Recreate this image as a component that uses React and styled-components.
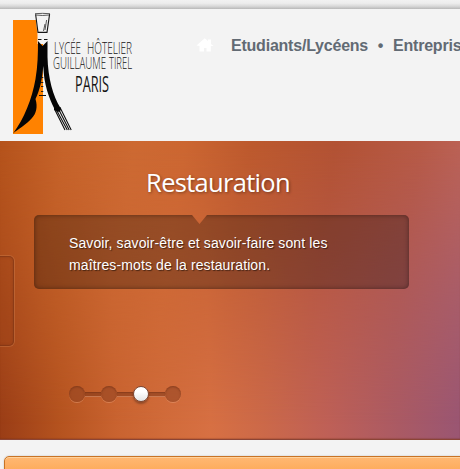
import React from 'react';
import styled, { createGlobalStyle } from 'styled-components';

const GlobalStyle = createGlobalStyle`
  * { box-sizing: border-box; }
  body { margin: 0; background: #f3f3f3; overflow: hidden; font-family: "Liberation Sans", Arial, sans-serif; }
`;

const Page = styled.div`
  height: 469px;
  overflow: hidden;
  display: flex;
  flex-direction: column;
`;

const TopShade = styled.div`
  height: 9px;
  flex: none;
  background: linear-gradient(#f1f1f1 0, #ededed 35%, #d9d9d9 68%, #b8b8b8 100%);
`;

const Header = styled.header`
  height: 132px;
  flex: none;
  display: flex;
  align-items: flex-start;
  background: #f3f3f3;
`;

const Logo = styled.svg`
  width: 150px;
  height: 132px;
  flex: none;
`;

const Nav = styled.nav`
  display: flex;
  align-items: center;
  margin: 27px 0 0 46px;
  height: 20px;
  white-space: nowrap;
  font-size: 16px;
  font-weight: bold;
  letter-spacing: -0.22px;
  color: #626a73;
`;

const HomeIcon = styled.svg`
  width: 18px;
  height: 16px;
  margin: 0 17px 2px 0;
`;

const NavLink = styled.a`
  color: inherit;
`;

const Separator = styled.span`
  width: 25px;
  text-align: center;
`;

const Hero = styled.section`
  position: relative;
  isolation: isolate;
  height: 299px;
  flex: none;
  border-bottom: 1px solid #8b4436;
  background: linear-gradient(88deg, #9a3d16 0, #b5531f 13%, #c96330 25%, #d16b3a 35%, #d77043 45%, #cc6949 56%, #be6057 70%, #aa5a64 85%, #975575 100%);
  box-shadow: inset 0 2px 2px -1px #602b1999, inset 0 -1px 1px #70301844;
  &::before {
    content: "";
    position: absolute;
    inset: 0;
    z-index: -1;
    background: linear-gradient(98deg, #b5531b 0, #c6632a 13%, #cc6932 27%, #cb6631 37%, #bc592d 50%, #b25233 67%, #b75a46 84%, #bf6962 100%);
    mask-image: linear-gradient(#000 0, #000c 20%, #0007 50%, transparent 95%);
  }
`;

const Slide = styled.article`
  width: 375px;
  margin-left: 34px;
  padding-top: 23px;
`;

const Title = styled.h2`
  margin: 0 7px 0 0;
  height: 51px;
  font: 400 25.5px/36px "Open Sans", sans-serif;
  letter-spacing: -0.7px;
  text-align: center;
  color: #fff;
  text-shadow: 1px 1px 3px #00000066;
`;

const Caption = styled.div`
  height: 74px;
  padding: 17px 35px;
  border-radius: 5px;
  background: #0004;
  box-shadow: inset 0 0 5px #0006;
  color: #fff;
  font-size: 14px;
  line-height: 22px;
  letter-spacing: 0.11px;
  text-shadow: 1px 1px 1px #0008;
  clip-path: polygon(0 0, 158px 0, 165.5px 9px, 173px 0, 100% 0, 100% 100%, 0 100%);
`;

const Pager = styled.div`
  display: flex;
  align-items: center;
  margin: 97px 0 0 35px;
`;

const Connector = styled.span`
  width: 16px;
  height: 5px;
  background: #71301577;
  border-bottom: 1px solid #eba27a88;
  box-shadow: inset 0 1px 1px #5d250f55;
`;

const Dot = styled.span`
  width: 16px;
  height: 16px;
  border-radius: 50%;
  background: ${({ $active }) => ($active ? 'linear-gradient(#fff 35%, #e4e4e4)' : '#8f412288')};
  border: ${({ $active }) => ($active ? '1px solid #7b4937' : '0')};
  box-shadow: ${({ $active }) => ($active ? '0 2px 2px #522a1977' : 'inset 0 1px 2px #5d250f77, 0 1px 0 #eba27a77')};
`;

const PreviousButton = styled.button`
  position: absolute;
  left: -30px;
  top: 115px;
  width: 44px;
  height: 90px;
  padding: 0;
  border: 1px solid #6c2b127a;
  border-radius: 5px;
  background: #7c2f1020;
  box-shadow: inset 0 0 3px #602b1955, 0 0 0 1px #e19b6844;
`;

const ContentPanel = styled.main`
  flex: none;
  height: 40px;
  margin: 16px -10px 0 4px;
  border: 1px solid #c87325;
  border-radius: 5px;
  background: linear-gradient(#ffb873, #fdaa59 15px);
  box-shadow: inset 0 1px #ffd29c, 0 0 2px #0003;
`;

function SchoolLogo() {
  return (
    <Logo viewBox="0 9 150 132" aria-label="Lycée Hôtelier Guillaume Tirel Paris">
      <path d="M13 20H43V134H13Z" fill="#ff8200" />
      <path d="M35 13H50L48 34V44H37.5V34Z" fill="#f3f3f3" />
      <path d="M35.6 14.2L38 32.4H47L49.6 14.2" fill="none" stroke="#161616" strokeWidth="1.1" />
      <path d="M35 13.7Q42.5 13 50 13.7M36 15Q42.5 16 49 15" fill="none" stroke="#333" strokeWidth=".8" />
      <path d="M45 24L43.5 31 M46.6 20L45 30" stroke="#444" strokeWidth=".9" />
      <path d="M38 39.5H41.5 M44 39.5H47.5" stroke="#111" strokeWidth="1" />
      <path d="M38 41L42.5 46L47.5 41V57C48 78 53 96 60.5 108L60 112L54.5 109C49 98 44 85 43.2 66C42.5 78 40 90 35.5 99C38 107 36 114 32 118C26 125 18 129 13 133.5C24 119 32 99 35.5 79C37.8 66 38 53 38 41Z" fill="#050505" />
      <path d="M43.2 66C43.4 76 44 84 45.5 90H43Z" fill="#f3f3f3" />
      <path d="M41 77.5H43.3 M41 82.5H43.3 M41 86.5H43.3 M41 91.5H43.3" stroke="#111" strokeWidth=".9" />
      <path d="M39 95.5H46" stroke="#111" />
      <path d="M54 107L60.5 107L61 110L58 112L54 110Z" fill="#050505" />
      <path d="M54.5 109L65 130 M56.5 110L67.3 130 M58.5 109L69.2 130 M60.3 108L71.2 130" fill="none" stroke="#080808" strokeWidth="1.05" />
      <g fill="#151515" fontFamily="Open Sans, sans-serif" fontWeight="300">
        <text x="54" y="54" fontSize="16" textLength="27" lengthAdjust="spacingAndGlyphs">LYCÉE</text>
        <text x="87" y="54" fontSize="16" textLength="45" lengthAdjust="spacingAndGlyphs">HÔTELIER</text>
        <text x="53" y="69" fontSize="17" textLength="53" lengthAdjust="spacingAndGlyphs">GUILLAUME</text>
        <text x="109" y="69" fontSize="17" textLength="23" lengthAdjust="spacingAndGlyphs">TIREL</text>
        <text x="75" y="92" fontSize="22" fontWeight="400" textLength="34" lengthAdjust="spacingAndGlyphs">PARIS</text>
      </g>
    </Logo>
  );
}

export default function App() {
  return (
    <>
      <GlobalStyle />
      <Page>
        <TopShade />
        <Header>
          <SchoolLogo />
          <Nav>
            <HomeIcon viewBox="0 0 18 16" aria-label="Accueil">
              <path d="M.5 8.5L8.7 1.2L12 4V2.5H15V7L17.5 9H14.8V14.5H10.5V11H8V14.5H3.5V9Z" fill="#fff" />
            </HomeIcon>
            <NavLink>Etudiants/Lycéens</NavLink>
            <Separator>•</Separator>
            <NavLink>Entreprises</NavLink>
          </Nav>
        </Header>
        <Hero>
          <PreviousButton aria-label="Précédent" />
          <Slide>
            <Title>Restauration</Title>
            <Caption>
              Savoir, savoir-être et savoir-faire sont les<br />
              maîtres-mots de la restauration.
            </Caption>
            <Pager>
              <Dot />
              <Connector />
              <Dot />
              <Connector />
              <Dot $active />
              <Connector />
              <Dot />
            </Pager>
          </Slide>
        </Hero>
        <ContentPanel />
      </Page>
    </>
  );
}
